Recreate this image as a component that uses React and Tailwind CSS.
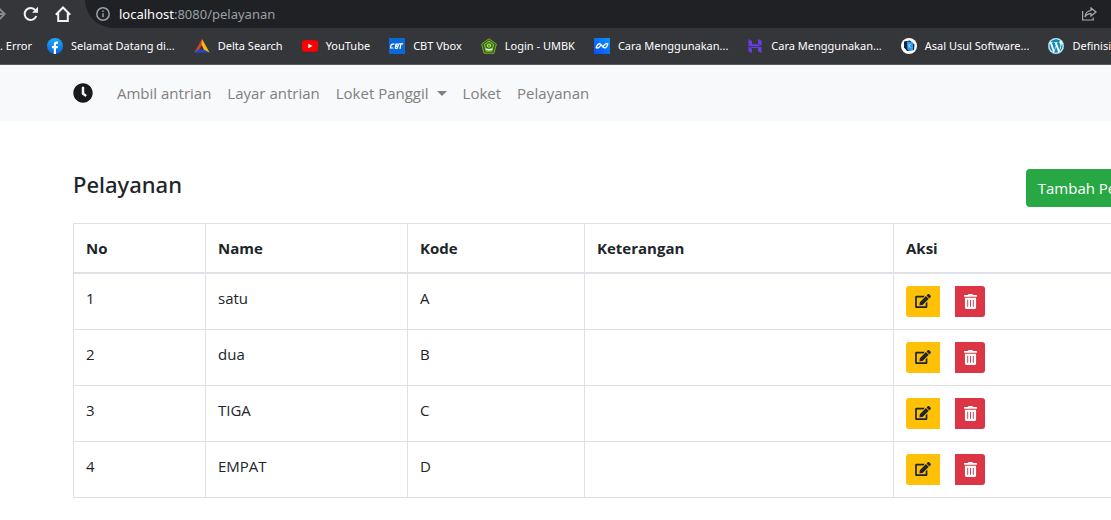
import React from "react";
import { FaClock, FaEdit, FaTrashAlt, FaWordpress } from "react-icons/fa";

const rows = [
  { id: 1, name: "satu", kode: "A" },
  { id: 2, name: "dua", kode: "B" },
  { id: 3, name: "TIGA", kode: "C" },
  { id: 4, name: "EMPAT", kode: "D" },
];

function FacebookIcon() {
  return (
    <svg viewBox="0 0 16 16" className="size-4 shrink-0">
      <defs>
        <linearGradient id="fb" x1="0" y1="0" x2="0" y2="1">
          <stop offset="0" stopColor="#19a9f9" />
          <stop offset="1" stopColor="#0866e0" />
        </linearGradient>
      </defs>
      <circle cx="8" cy="8" r="8" fill="url(#fb)" />
      <path d="M6.8 15.9V10.3H4.9V8h1.9V6.6c0-2 1-3 2.7-3 .6 0 1.1.1 1.5.2v2h-.9c-.9 0-1.1.4-1.1 1.1V8h2l-.4 2.3H9v5.6a8 8 0 0 1-2.2 0z" fill="#fff" />
    </svg>
  );
}

function DeltaIcon() {
  return (
    <svg viewBox="0 0 16 16" className="size-4 shrink-0">
      <path d="M8 1 0.3 14.8 5 12.5 8 8z" fill="#d8402a" />
      <path d="M8 1l7.7 13.8L10 12 7.5 7z" fill="#fbb614" />
      <path d="M0.3 14.8 5.5 10.8 10 12l5.7 2.8z" fill="#1c49c8" />
      <path d="M7.8 7 5.6 11 9.6 12z" fill="#35363a" />
    </svg>
  );
}

function YoutubeIcon() {
  return (
    <svg viewBox="0 0 16 16" className="size-4 shrink-0">
      <rect x="0" y="2.3" width="16" height="11.4" rx="2.8" fill="#f00" />
      <path d="M6.3 5.7v4.6L10.5 8z" fill="#fff" />
    </svg>
  );
}

function CbtIcon() {
  return (
    <svg viewBox="0 0 16 16" className="size-4 shrink-0">
      <rect width="16" height="16" fill="#0a68d8" />
      <g fill="none" stroke="#fff" strokeWidth="1.2">
        <path d="M5.4 6.2H3.2L1.9 7.4 1.6 10h2.8" />
        <path d="M6.2 10.6 7 6.1h2l.4.9-.6 1.2H7l1.9.2-.3 1.3-.6.6H6.2" />
        <path d="M9.8 5.9h4.4M11.9 6l-.9 5" />
      </g>
    </svg>
  );
}

function UmbkIcon() {
  return (
    <svg viewBox="0 0 16 16" className="size-4 shrink-0">
      <path d="M8 .8 15.4 6l-2.4 9.3H3L.6 6z" fill="#12702a" stroke="#a8a01e" strokeWidth=".9" />
      <path d="M8 3.2 12.6 6.4l-1.6 6.8H5L3.4 6.4z" fill="#1d7d33" stroke="#d9c922" strokeWidth=".8" />
      <circle cx="8" cy="7.6" r="2.1" fill="#e5d43a" />
      <path d="M8 6 9 8.5H7z" fill="#12702a" />
      <path d="M4.8 10.2 8 11l3.2-.8v1.8L8 12.8 4.8 12z" fill="#e8efe0" />
    </svg>
  );
}

function NiagaIcon() {
  return (
    <svg viewBox="0 0 16 16" className="size-4 shrink-0">
      <defs>
        <linearGradient id="ng" x1="0" y1="1" x2="1" y2="0">
          <stop offset="0" stopColor="#0a4cf5" />
          <stop offset="1" stopColor="#0a96ff" />
        </linearGradient>
      </defs>
      <rect width="16" height="16" fill="url(#ng)" />
      <path
        d="M2.2 9.6C3 6.6 5 5 6.6 6.2l2.6 3c1.8 1.4 4 .2 4.6-3.2M2.2 9.6c1.4.9 2.6.2 3.6-1.2L7.2 6.8M13.8 6c-1.4-.9-2.6-.2-3.6 1.2L8.8 8.8"
        fill="none"
        stroke="#fff"
        strokeWidth="1.3"
        strokeLinecap="round"
      />
    </svg>
  );
}

function HostingerIcon() {
  return (
    <svg viewBox="0 0 16 16" className="size-4 shrink-0" fill="#673de6">
      <path d="M1.4.9 5 2.9v3.4h5.2l3.8 1.9H1.4zM11 .9l3.6 1.9v5L11 5.9z" />
      <path d="M14.6 15.1 11 13.2v-3.1H5.6L1.8 8.9h12.8zM1.4 8.9 5 10.4v4.7l-3.6-1.9z" />
    </svg>
  );
}

function SoftwareIcon() {
  return (
    <svg viewBox="0 0 16 16" className="size-4 shrink-0">
      <circle cx="8" cy="8" r="8" fill="#fff" />
      <path d="M3 3.5 9 2.5 13.5 6.5 13 12 6 13 3 9.5z" fill="#10264a" />
      <path d="M6 3.6l6 .6v8L6.4 11.8z" fill="#2b9df4" />
      <path d="M8 5.8v4M8 7.8l2-1.8M8 7.8l2 2" stroke="#a9dbff" strokeWidth=".8" fill="none" />
    </svg>
  );
}

function WordpressIcon() {
  return (
    <span className="flex size-4 shrink-0 items-center justify-center rounded-full bg-white text-[#0d8ab8]">
      <FaWordpress className="size-4" />
    </span>
  );
}

const bookmarks = [
  { label: "Selamat Datang di...", Icon: FacebookIcon },
  { label: "Delta Search", Icon: DeltaIcon },
  { label: "YouTube", Icon: YoutubeIcon },
  { label: "CBT Vbox", Icon: CbtIcon },
  { label: "Login - UMBK", Icon: UmbkIcon },
  { label: "Cara Menggunakan...", Icon: NiagaIcon },
  { label: "Cara Menggunakan...", Icon: HostingerIcon },
  { label: "Asal Usul Software...", Icon: SoftwareIcon },
  { label: "Definisi", Icon: WordpressIcon },
];

function BrowserChrome() {
  return (
    <header className="border-b border-[#5b5c5f] bg-[#35363a] font-['Noto_Sans',sans-serif] text-white">
      <div className="flex h-7 items-center">
        <button type="button" aria-label="Forward" className="shrink-0 text-[#8a8b8e]">
          <svg viewBox="0 0 6 16" className="h-4 w-[6px]" fill="none" stroke="currentColor" strokeWidth="2">
            <path d="M-6 8H4.5M-.8 2.6 4.6 8l-5.4 5.4" />
          </svg>
        </button>
        <button type="button" aria-label="Reload" className="ml-[17px] shrink-0">
          <svg viewBox="0 0 16 16" className="size-4" fill="none">
            <path d="M13.3 10A6 6 0 1 1 12.4 4.3" stroke="#f1f3f4" strokeWidth="2" />
            <path d="M15 .8v6H9z" fill="#f1f3f4" />
          </svg>
        </button>
        <button type="button" aria-label="Home" className="ml-4 shrink-0">
          <svg viewBox="0 0 16 16" className="size-4" fill="none" stroke="#f1f3f4" strokeWidth="2">
            <path d="M.8 8.7 8 1.5l7.2 7.2M3.2 7v8h9.6V7" />
          </svg>
        </button>
        <div className="ml-[14px] flex h-7 grow items-center rounded-bl-full bg-[#202124] pl-[11px]">
          <svg viewBox="0 0 14 14" className="size-[14px] shrink-0" fill="none" stroke="#9aa0a6" strokeWidth="1.5">
            <circle cx="7" cy="7" r="6.2" />
            <path d="M7 6.2v4M7 3.6v1.5" />
          </svg>
          <p className="ml-[9px] grow text-[13px]">
            localhost<span className="text-[#9aa0a6]">:8080/pelayanan</span>
          </p>
          <button type="button" aria-label="Share" className="mr-[14px] shrink-0">
            <svg viewBox="0 0 16 14" className="h-[14px] w-4" fill="none" stroke="#a9abae" strokeWidth="1.2">
              <path d="M1.6 4v9h10.6v-2.5" />
              <path d="M10 1l5 4-5 4V6.7C7 6.7 5 8 4 10c.2-3.5 2.5-6 6-6.5z" />
            </svg>
          </button>
        </div>
      </div>
      <nav aria-label="Bookmarks" className="flex h-9 items-center overflow-hidden text-[11px] whitespace-nowrap">
        <a href="#error" className="shrink-0 pr-[15px]">
          . Error
        </a>
        <div className="flex items-center gap-[19px]">
          {bookmarks.map(({ label, Icon }, i) => (
            <a key={i} href="#bookmark" className="flex shrink-0 items-center gap-2">
              <Icon />
              {label}
            </a>
          ))}
        </div>
      </nav>
    </header>
  );
}

function Navbar() {
  return (
    <nav className="flex h-14 items-center gap-4 bg-[#f8f9fa] pl-[73px] text-[#7f8080]">
      <a href="#home" aria-label="Home" className="mr-2">
        <FaClock className="size-5 text-[#1a1a1a]" />
      </a>
      <a href="#ambil">Ambil antrian</a>
      <a href="#layar">Layar antrian</a>
      <button type="button" className="flex items-center gap-2">
        Loket Panggil
        <svg viewBox="0 0 10 5" className="h-[5px] w-[10px]" fill="currentColor">
          <path d="M0 0h10L5 5z" />
        </svg>
      </button>
      <a href="#loket">Loket</a>
      <a href="#pelayanan">Pelayanan</a>
    </nav>
  );
}

const cell = "border border-[#dee2e6] px-3 text-left";

export default function App() {
  return (
    <div className="overflow-hidden bg-white font-['Open_Sans','Noto_Sans',sans-serif] text-[15px] leading-6 text-[#212529]">
      <BrowserChrome />
      <Navbar />
      <main className="-mr-[72px] pt-12 pb-[22px] pl-[73px]">
        <div className="mb-4 flex items-start justify-between">
          <h1 className="font-['Noto_Sans',sans-serif] text-[22px] leading-[30px] font-medium">Pelayanan</h1>
          <button type="button" className="h-[38px] rounded bg-[#28a745] px-3 text-white">
            Tambah Pelayanan
          </button>
        </div>
        <table className="w-full table-fixed border-collapse">
          <thead>
            <tr className="h-[49px] border-b-2 border-[#dee2e6]">
              <th className={`${cell} w-[132px]`}>No</th>
              <th className={`${cell} w-[202px]`}>Name</th>
              <th className={`${cell} w-[177px]`}>Kode</th>
              <th className={`${cell} w-[309px]`}>Keterangan</th>
              <th className={cell}>Aksi</th>
            </tr>
          </thead>
          <tbody>
            {rows.map((row) => (
              <tr key={row.id} className="align-top">
                <td className={`${cell} py-3`}>{row.id}</td>
                <td className={`${cell} py-3`}>{row.name}</td>
                <td className={`${cell} py-3`}>{row.kode}</td>
                <td className={`${cell} py-3`}></td>
                <td className={`${cell} py-3`}>
                  <div className="flex gap-[15px]">
                    <button type="button" aria-label="Edit" className="flex h-[31px] w-[34px] items-center justify-center rounded-l-[3px] bg-[#ffc107]">
                      <FaEdit className="h-[14px] w-4" />
                    </button>
                    <button type="button" aria-label="Hapus" className="flex h-[31px] w-[30px] items-center justify-center rounded-r-[3px] bg-[#dc3545] text-white">
                      <FaTrashAlt className="h-[15px] w-[13px]" />
                    </button>
                  </div>
                </td>
              </tr>
            ))}
          </tbody>
        </table>
      </main>
    </div>
  );
}
